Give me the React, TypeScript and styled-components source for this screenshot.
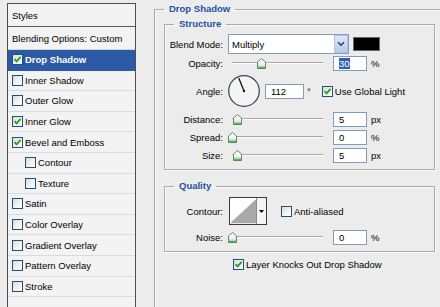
import styled, { createGlobalStyle } from "styled-components";

const Global = createGlobalStyle`
  html, body {
    margin: 0;
    padding: 0;
    background: #ececec;
    width: 440px;
    height: 307px;
    overflow: hidden;
  }
  body {
    font-family: "Liberation Sans", Arial, sans-serif;
    font-size: 9.5px;
    color: #000;
  }
`;

const Dialog = styled.div`
  display: flex;
  align-items: flex-start;
  padding: 3px 0 0 7px;
  width: 440px;
  height: 307px;
  box-sizing: border-box;
  overflow: hidden;
`;

const StyleList = styled.div`
  width: 129px;
  height: 320px;
  flex-shrink: 0;
  box-sizing: border-box;
  border: 1px solid #4e4e4e;
  background: #f3f3f3;
`;

const ListHeader = styled.div<{ $h: number; $dark?: boolean }>`
  height: ${p => p.$h}px;
  display: flex;
  align-items: center;
  padding-left: 4px;
  border-bottom: 1px solid ${p => (p.$dark ? "#5a5a5a" : "#d4d4d4")};
`;

const ListRow = styled.div<{ $selected?: boolean; $indent?: boolean }>`
  height: 19.6px;
  display: flex;
  align-items: center;
  gap: 2px;
  padding-left: ${p => (p.$indent ? 17 : 4)}px;
  border-bottom: 1px solid ${p => (p.$selected ? "#2d5aa5" : "#dadada")};
  background: ${p => (p.$selected ? "#2d5aa5" : "transparent")};
  color: ${p => (p.$selected ? "#fff" : "#000")};
  font-weight: ${p => (p.$selected ? "bold" : "normal")};
`;

const Box = styled.span`
  width: 11px;
  height: 11px;
  box-sizing: border-box;
  flex-shrink: 0;
  border: 1px solid #1f4f7e;
  background: linear-gradient(135deg, #dcdcd6 0%, #f4f4f1 60%, #fff 100%);
  display: inline-flex;
  align-items: center;
  justify-content: center;
`;

const CheckBox = ({ checked }: { checked?: boolean }) => (
  <Box>
    {checked && (
      <svg width="9" height="9" viewBox="0 0 9 9">
        <path d="M1.5 4.2 L3.6 6.4 L7.6 1.8" fill="none" stroke="#21a121" strokeWidth="1.8" />
      </svg>
    )}
  </Box>
);

const Right = styled.div`
  margin-left: 18px;
  flex-shrink: 0;
`;

const Group = styled.fieldset<{ $outer?: boolean }>`
  margin: 0;
  min-width: 0;
  box-sizing: border-box;
  border: 1px solid #a9a9a9;
  box-shadow: inset 1px 1px 0 #fbfbfb, 1px 1px 0 #fbfbfb;
  width: ${p => (p.$outer ? "320px" : "271px")};
  height: ${p => (p.$outer ? "330px" : "auto")};
  padding: ${p => (p.$outer ? "3px 0 0 9px" : "4px 0 5px 0")};
  & + & {
    margin-top: 10px;
  }
`;

const Legend = styled.legend<{ $outer?: boolean }>`
  padding: 0 5px;
  margin-left: ${p => (p.$outer ? 0 : 9)}px;
  font-weight: bold;
  color: #21509c;
  line-height: 12px;
`;

const Row = styled.div<{ $h: number; $gap?: number; $pad?: number }>`
  display: flex;
  align-items: center;
  height: ${p => p.$h}px;
  margin-top: ${p => p.$gap ?? 0}px;
  padding-left: ${p => p.$pad ?? 0}px;
`;

const Label = styled.span`
  width: 58px;
  margin-right: 5px;
  text-align: right;
  flex-shrink: 0;
`;

const Select = styled.div`
  width: 121px;
  height: 20px;
  box-sizing: border-box;
  border: 1px solid #7f9db9;
  background: #fff;
  display: flex;
  align-items: center;
  padding-left: 3px;
`;

const SelectText = styled.span`
  flex: 1;
`;

const DropButton = styled.span`
  width: 14px;
  height: 18px;
  box-sizing: border-box;
  border: 1px solid #b4c4e2;
  background: linear-gradient(#dfe8fa, #b7c9ee);
  display: flex;
  align-items: center;
  justify-content: center;
`;

const Swatch = styled.span`
  width: 27px;
  height: 14px;
  margin-left: 4px;
  box-sizing: border-box;
  border: 1px solid #6a6a6a;
  background: #000;
`;

const Track = styled.div`
  position: relative;
  width: 91px;
  height: 14px;
  margin-left: 4px;
  &::before {
    content: "";
    position: absolute;
    left: 0;
    right: 0;
    top: 6px;
    height: 1px;
    background: #a9a6a0;
    border-bottom: 1px solid #fff;
  }
`;

const Thumb = styled.svg`
  position: absolute;
  top: 2px;
`;

const Slider = ({ pos }: { pos: number }) => (
  <Track>
    <Thumb width="9" height="11" viewBox="0 0 9 11" style={{ left: pos * 91 - 4.5 }}>
      <defs>
        <linearGradient id="tg" x1="0" y1="0" x2="0" y2="1">
          <stop offset="0" stopColor="#ffffff" />
          <stop offset="0.6" stopColor="#eef2ee" />
          <stop offset="1" stopColor="#6cbf6c" />
        </linearGradient>
      </defs>
      <polygon points="0.5,4 4.5,0.5 8.5,4 8.5,10.5 0.5,10.5" fill="url(#tg)" stroke="#6f7f73" />
      <line x1="1" y1="10" x2="8" y2="10" stroke="#2f9a3a" />
    </Thumb>
  </Track>
);

const Field = styled.span<{ $w: number; $ml?: number }>`
  width: ${p => p.$w}px;
  height: 15px;
  margin-left: ${p => p.$ml ?? 10}px;
  box-sizing: border-box;
  border: 1px solid #7f9db9;
  background: #fff;
  display: flex;
  align-items: center;
  padding-left: 5px;
`;

const Picked = styled.span`
  background: #2f5fb3;
  color: #fff;
`;

const Unit = styled.span<{ $ml?: number }>`
  margin-left: ${p => p.$ml ?? 4}px;
`;

const CheckLabel = styled.span<{ $ml: number }>`
  margin-left: ${p => p.$ml}px;
  display: flex;
  align-items: center;
`;

const Dial = ({ angle }: { angle: number }) => {
  const r = (angle * Math.PI) / 180;
  const x = 16 + Math.cos(r) * 14;
  const y = 16 - Math.sin(r) * 14;
  return (
    <svg width="32" height="32" viewBox="0 0 32 32">
      <circle cx="16" cy="16" r="15.3" fill="#f3f4f6" stroke="#3c3f48" strokeWidth="1.2" />
      <line x1="16" y1="16" x2={x} y2={y} stroke="#111" strokeWidth="1.3" />
      <circle cx="16" cy="16" r="1.2" fill="#111" />
    </svg>
  );
};

const ContourPicker = styled.div`
  width: 38px;
  height: 28px;
  margin-left: 1px;
  box-sizing: border-box;
  border: 1px solid #3a3a3a;
  display: flex;
  background: #fff;
`;

const ContourArrow = styled.span`
  width: 9px;
  border-left: 1px solid #8a8a8a;
  background: #f4f4f4;
  display: flex;
  align-items: center;
  justify-content: center;
`;

const items: { name: string; checked?: boolean; selected?: boolean; indent?: boolean }[] = [
  { name: "Drop Shadow", checked: true, selected: true },
  { name: "Inner Shadow" },
  { name: "Outer Glow" },
  { name: "Inner Glow", checked: true },
  { name: "Bevel and Emboss", checked: true },
  { name: "Contour", indent: true },
  { name: "Texture", indent: true },
  { name: "Satin" },
  { name: "Color Overlay" },
  { name: "Gradient Overlay" },
  { name: "Pattern Overlay" },
  { name: "Stroke" },
];

export default function App() {
  return (
    <>
      <Global />
      <Dialog>
        <StyleList>
          <ListHeader $h={22} $dark>Styles</ListHeader>
          <ListHeader $h={22}>Blending Options: Custom</ListHeader>
          {items.map(it => (
            <ListRow key={it.name} $selected={it.selected} $indent={it.indent}>
              <CheckBox checked={it.checked} />
              <span>{it.name}</span>
            </ListRow>
          ))}
          <ListRow />
        </StyleList>

        <Right>
          <Group $outer>
            <Legend $outer>Drop Shadow</Legend>

            <Group>
              <Legend>Structure</Legend>
              <Row $h={20}>
                <Label>Blend Mode:</Label>
                <Select>
                  <SelectText>Multiply</SelectText>
                  <DropButton>
                    <svg width="8" height="6" viewBox="0 0 8 6">
                      <path d="M1 1.2 L4 4.2 L7 1.2" fill="none" stroke="#2a3f6a" strokeWidth="1.6" />
                    </svg>
                  </DropButton>
                </Select>
                <Swatch />
              </Row>
              <Row $h={18}>
                <Label>Opacity:</Label>
                <Slider pos={0.32} />
                <Field $w={34}><Picked>30</Picked></Field>
                <Unit>%</Unit>
              </Row>
              <Row $h={38}>
                <Label>Angle:</Label>
                <Dial angle={112} />
                <Field $w={39} $ml={5}>112</Field>
                <Unit $ml={3}>°</Unit>
                <CheckLabel $ml={11}>
                  <CheckBox checked />
                  <Unit $ml={2}>Use Global Light</Unit>
                </CheckLabel>
              </Row>
              <Row $h={18}>
                <Label>Distance:</Label>
                <Slider pos={0.065} />
                <Field $w={34}>5</Field>
                <Unit>px</Unit>
              </Row>
              <Row $h={18}>
                <Label>Spread:</Label>
                <Slider pos={0.01} />
                <Field $w={34}>0</Field>
                <Unit>%</Unit>
              </Row>
              <Row $h={18}>
                <Label>Size:</Label>
                <Slider pos={0.065} />
                <Field $w={34}>5</Field>
                <Unit>px</Unit>
              </Row>
            </Group>

            <Group>
              <Legend>Quality</Legend>
              <Row $h={28} $gap={1}>
                <Label>Contour:</Label>
                <ContourPicker>
                  <svg width="28" height="26" viewBox="0 0 28 26">
                    <polygon points="0,26 28,0 28,26" fill="#a9a9a9" />
                  </svg>
                  <ContourArrow>
                    <svg width="5" height="3" viewBox="0 0 5 3">
                      <polygon points="0,0 5,0 2.5,3" fill="#000" />
                    </svg>
                  </ContourArrow>
                </ContourPicker>
                <CheckLabel $ml={14}>
                  <CheckBox />
                  <Unit $ml={2}>Anti-aliased</Unit>
                </CheckLabel>
              </Row>
              <Row $h={18} $gap={3}>
                <Label>Noise:</Label>
                <Slider pos={0.01} />
                <Field $w={34}>0</Field>
                <Unit>%</Unit>
              </Row>
            </Group>

            <Row $h={18} $gap={3} $pad={69}>
              <CheckBox checked />
              <Unit $ml={2}>Layer Knocks Out Drop Shadow</Unit>
            </Row>
          </Group>
        </Right>
      </Dialog>
    </>
  );
}
